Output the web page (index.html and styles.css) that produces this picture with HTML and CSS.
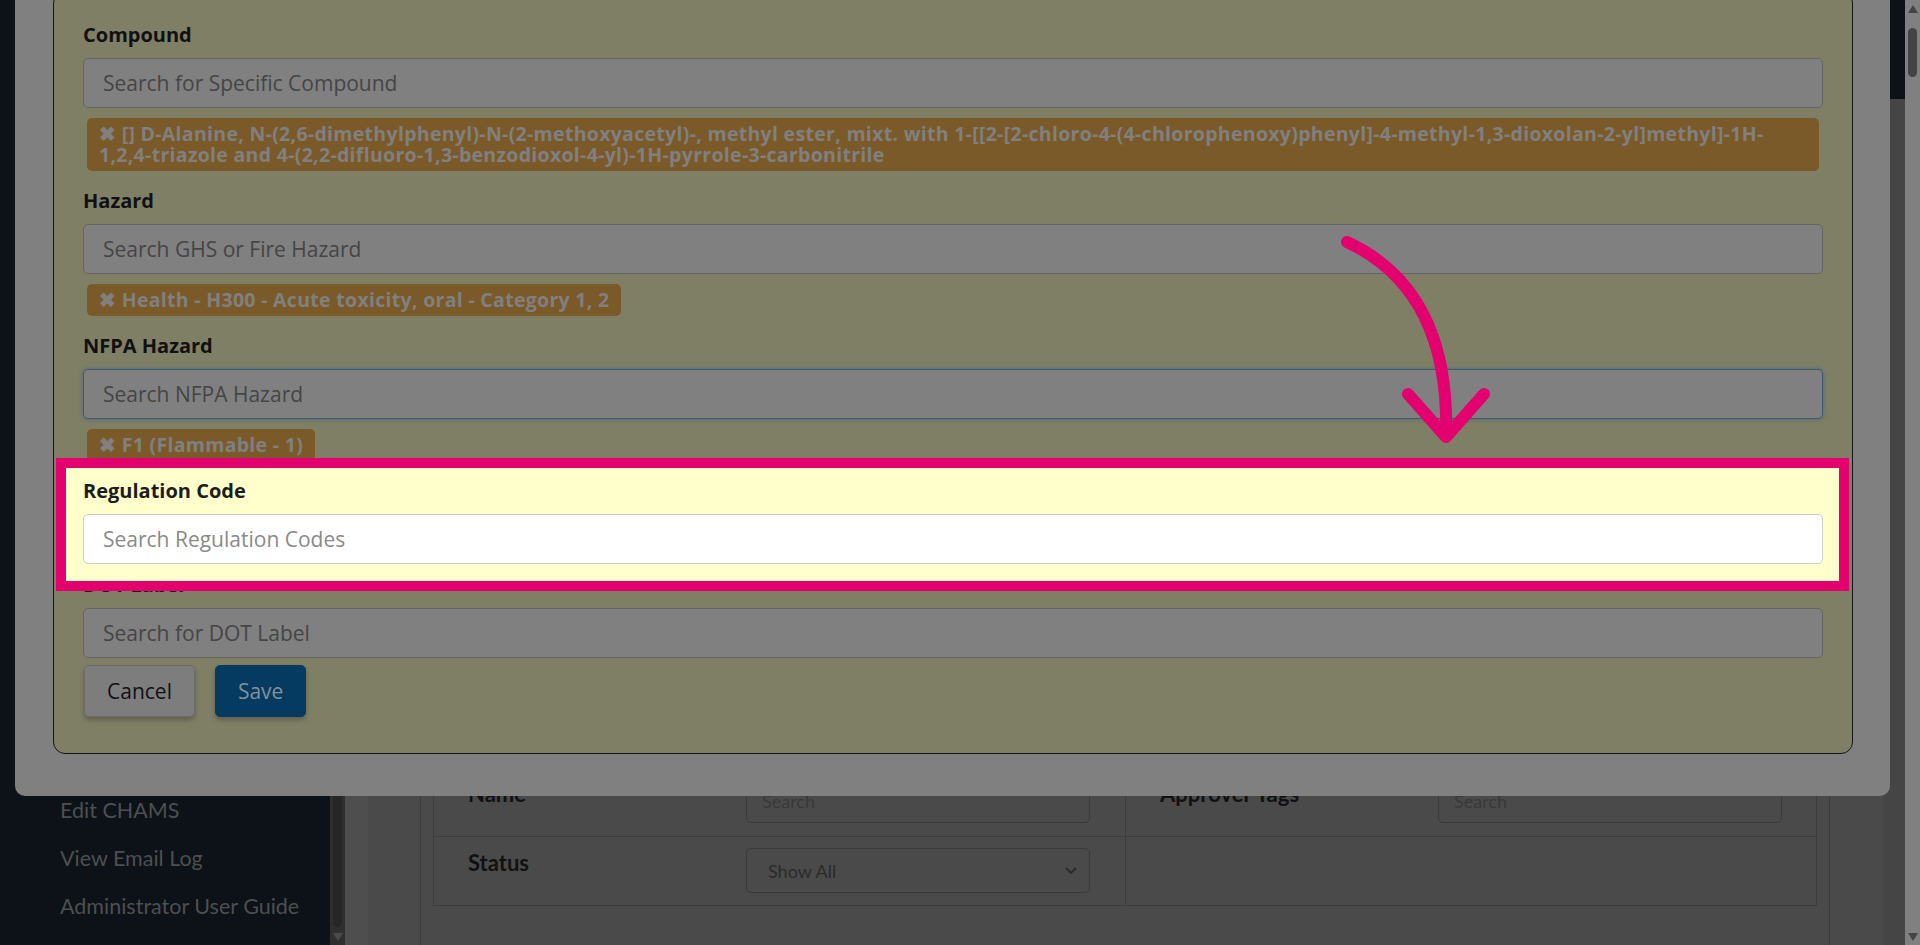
FILE: index.html
```html
<!DOCTYPE html>
<html>
  <head>
    <title>CHAMS Administration</title>
    <link rel="stylesheet" href="styles.css">
  </head>
  <body>
    <div class="app">
      <nav class="sidebar">
        <a href="#">Dashboard</a>
        <a href="#">Chemical Requests</a>
        <a href="#">Approvals</a>
        <a href="#">Manage Users</a>
        <a href="#">Manage Approvers</a>
        <a href="#">Manage Compounds</a>
        <a href="#">Reports</a>
        <a href="#">Edit CHAMS</a>
        <a href="#">View Email Log</a>
        <a href="#">Administrator User Guide</a>
      </nav>
      <div class="side-scroll">
        <div class="side-thumb"></div>
        <svg class="scroll-arrow" viewBox="0 0 10 8" width="10" height="8"><polygon points="0,0 10,0 5,8" fill="#4b4b4b"/></svg>
      </div>
      <div class="main">
        <header class="topbar"></header>
        <div class="content">
          <div class="gutter"></div>
          <div class="content-body">
            <section class="card">
              <div class="filters">
                <div class="filter">
                  <span class="filter-label">Name</span>
                  <input class="filter-input" placeholder="Search">
                </div>
                <div class="filter">
                  <span class="filter-label">Approver Tags</span>
                  <input class="filter-input" placeholder="Search">
                </div>
                <div class="filter">
                  <span class="filter-label">Status</span>
                  <div class="filter-select">
                    Show All
                    <svg viewBox="0 0 12 8" width="12" height="8"><polyline points="1,1 6,6 11,1" fill="none" stroke="#2a2a2a" stroke-width="1.8"/></svg>
                  </div>
                </div>
                <div class="filter"></div>
              </div>
            </section>
          </div>
          <div class="gutter-right"></div>
        </div>
      </div>
      <div class="page-scroll">
        <svg class="scroll-arrow" viewBox="0 0 10 8" width="10" height="8"><polygon points="0,8 10,8 5,0" fill="#444"/></svg>
        <div class="page-thumb"></div>
        <svg class="scroll-arrow bottom" viewBox="0 0 10 8" width="10" height="8"><polygon points="0,0 10,0 5,8" fill="#444"/></svg>
      </div>
    </div>

    <div class="modal">
      <div class="modal-panel">
        <div class="field">
          <label class="field-label">Compound</label>
          <input class="field-input" placeholder="Search for Specific Compound">
          <div class="tags">
            <span class="tag is-long"><span class="tag-x">✖</span> [] D-Alanine, N-(2,6-dimethylphenyl)-N-(2-methoxyacetyl)-, methyl ester, mixt. with 1-[[2-[2-chloro-4-(4-chlorophenoxy)phenyl]-4-methyl-1,3-dioxolan-2-yl]methyl]-1H-<br>1,2,4-triazole and 4-(2,2-difluoro-1,3-benzodioxol-4-yl)-1H-pyrrole-3-carbonitrile</span>
          </div>
        </div>
        <div class="field">
          <label class="field-label">Hazard</label>
          <input class="field-input" placeholder="Search GHS or Fire Hazard">
          <div class="tags">
            <span class="tag"><span class="tag-x">✖</span> Health - H300 - Acute toxicity, oral - Category 1, 2</span>
          </div>
        </div>
        <div class="field">
          <label class="field-label">NFPA Hazard</label>
          <input class="field-input is-focused" placeholder="Search NFPA Hazard">
          <div class="tags">
            <span class="tag"><span class="tag-x">✖</span> F1 (Flammable - 1)</span>
          </div>
        </div>
        <div class="field is-spotlit">
          <label class="field-label">Regulation Code</label>
          <input class="field-input" placeholder="Search Regulation Codes">
        </div>
        <div class="field">
          <label class="field-label">DOT Label</label>
          <input class="field-input" placeholder="Search for DOT Label">
        </div>
        <div class="actions">
          <button class="btn btn-cancel">Cancel</button>
          <button class="btn btn-save">Save</button>
        </div>
      </div>
    </div>

    <svg class="callout" viewBox="0 0 1920 945" width="1920" height="945">
      <path d="M1347 242 Q1450 290 1446 435" fill="none" stroke="#e3006f" stroke-width="12" stroke-linecap="round"/>
      <path d="M1408 394 L1446 437 L1484 394" fill="none" stroke="#e3006f" stroke-width="12" stroke-linecap="round" stroke-linejoin="round"/>
    </svg>
  </body>
</html>
```

FILE: styles.css
```css
* { box-sizing: border-box; }
html, body {
  margin: 0;
  height: 100%;
  overflow: hidden;
}
body {
  font-family: Lato, "Liberation Sans", sans-serif;
  background: #4a4a4a;
}

/* page behind the dialog (already dimmed) */
.app {
  display: flex;
  height: 945px;
}
.sidebar {
  width: 330px;
  background: #0c1217;
  display: flex;
  flex-direction: column;
  justify-content: flex-end;
  overflow: hidden;
  padding: 0 0 15px 60px;
}
.sidebar a {
  color: #4d4f51;
  font-size: 21.5px;
  line-height: 24px;
  padding: 12px 0;
  text-decoration: none;
  white-space: nowrap;
}
.side-scroll {
  width: 15px;
  background: #2f2f2f;
  display: flex;
  flex-direction: column;
  justify-content: flex-end;
  align-items: center;
  padding-bottom: 4px;
}
.side-thumb {
  width: 9px;
  height: 300px;
  border-radius: 5px;
  background: #262626;
  margin-bottom: 6px;
}
.scroll-arrow { display: block; flex: none; }

.main {
  flex: 1;
  display: flex;
  flex-direction: column;
}
.topbar {
  height: 99px;
  background: #0c1217;
}
.content {
  flex: 1;
  display: flex;
}
.gutter {
  width: 23px;
  background: #4e4e4e;
}
.content-body {
  flex: 1;
  display: flex;
  padding: 0 53px 0 52px;
}
.card {
  flex: 1;
  display: flex;
  flex-direction: column;
  justify-content: flex-end;
  border-left: 1px solid #3b3b3b;
  border-right: 1px solid #3b3b3b;
  padding: 0 12px 39px 12px;
}
.gutter-right {
  width: 22px;
  background: #454545;
}

.filters {
  display: grid;
  grid-template-columns: 692px 1fr;
  border: 1px solid #3d3d3d;
}
.filter {
  display: grid;
  grid-template-columns: 278px 344px;
  align-items: start;
  height: 69px;
  padding: 11px 34px 12px;
  border-bottom: 1px solid #3d3d3d;
}
.filter:nth-child(odd) { border-right: 1px solid #3d3d3d; }
.filter:nth-last-child(-n+2) {
  border-bottom: 0;
  height: 68px;
}
.filter-label {
  font-weight: 700;
  font-size: 22px;
  line-height: 26px;
  margin-top: 2px;
  color: #111;
}
.filter-input, .filter-select {
  height: 45px;
  border: 1px solid #3a3a3a;
  border-radius: 5px;
  background: #4a4a4a;
  font-family: Lato, sans-serif;
  font-size: 18px;
  color: #2a2a2a;
}
.filter-input { height: 44px; padding: 0 15px; }
.filter-input::placeholder { color: #393939; }
.filter-select {
  display: flex;
  align-items: center;
  justify-content: space-between;
  padding: 0 12px 0 21px;
}

.page-scroll {
  width: 15px;
  background: #808080;
  display: flex;
  flex-direction: column;
  align-items: center;
  padding: 5px 0 4px;
}
.page-thumb {
  width: 9px;
  height: 49px;
  margin-top: 15px;
  border-radius: 5px;
  background: #444;
}
.scroll-arrow.bottom { margin-top: auto; }

/* dialog */
.modal {
  position: fixed;
  left: 15px;
  top: -47px;
  width: 1875px;
  padding: 38px 37px 42px 38px;
  background: #808080;
  border-radius: 10px;
  font-family: "Open Sans", sans-serif;
}
.modal-panel {
  background: #7f7f66;
  border: 1px solid #161616;
  border-radius: 12px;
  padding: 32px 29px 36px;
}
.field { margin-bottom: 12px; }
.field:has(+ .actions) { margin-bottom: 7px; }
.field-label {
  display: block;
  font-weight: 700;
  font-size: 20px;
  line-height: 22px;
  margin-bottom: 12px;
  color: #111;
}
.field-input {
  display: block;
  width: 100%;
  height: 50px;
  padding: 0 19px;
  border: 1px solid #646464;
  border-radius: 5px;
  background: #808080;
  font-family: "Open Sans", sans-serif;
  font-size: 21px;
}
.field-input::placeholder { color: #454545; }
.field-input.is-focused {
  border-color: #3c5978;
  box-shadow: 0 0 4px 1px rgba(40, 80, 130, 0.35);
}

.tags {
  display: flex;
  flex-wrap: wrap;
  margin-top: 10px;
}
.tag {
  margin: 0 4px 7px;
  padding: 5px 12px 6px;
  border-radius: 5px;
  background: #7b5a2a;
  color: #808080;
  font-weight: 700;
  font-size: 19.5px;
  letter-spacing: 0.3px;
  line-height: 21px;
}
.tag.is-long { flex-grow: 1; }

.field.is-spotlit {
  position: relative;
  z-index: 1;
  margin: -12px -16px -7px -17px;
  padding: 12px 16px 17px 17px;
  background: #ffffcc;
  outline: 10px solid #e3006f;
}
.is-spotlit .field-label { color: #1c1c1c; }
.is-spotlit .field-input {
  background: #fff;
  border-color: #cdcdcd;
}
.is-spotlit .field-input::placeholder { color: #8a8a8a; }

.actions {
  display: flex;
  gap: 20px;
}
.btn {
  height: 52px;
  padding: 0 22px;
  border-radius: 5px;
  font-family: "Open Sans", sans-serif;
  font-size: 21px;
  box-shadow: 0 3px 5px rgba(0, 0, 0, 0.25);
}
.btn-cancel {
  margin-left: 1px;
  background: #7d7d7d;
  border: 1px solid #6b6b6b;
  color: #111;
}
.btn-save {
  background: #053a61;
  border: 1px solid #053a61;
  color: #86909a;
}

.callout {
  position: fixed;
  left: 0;
  top: 0;
  z-index: 5;
  pointer-events: none;
}
```
